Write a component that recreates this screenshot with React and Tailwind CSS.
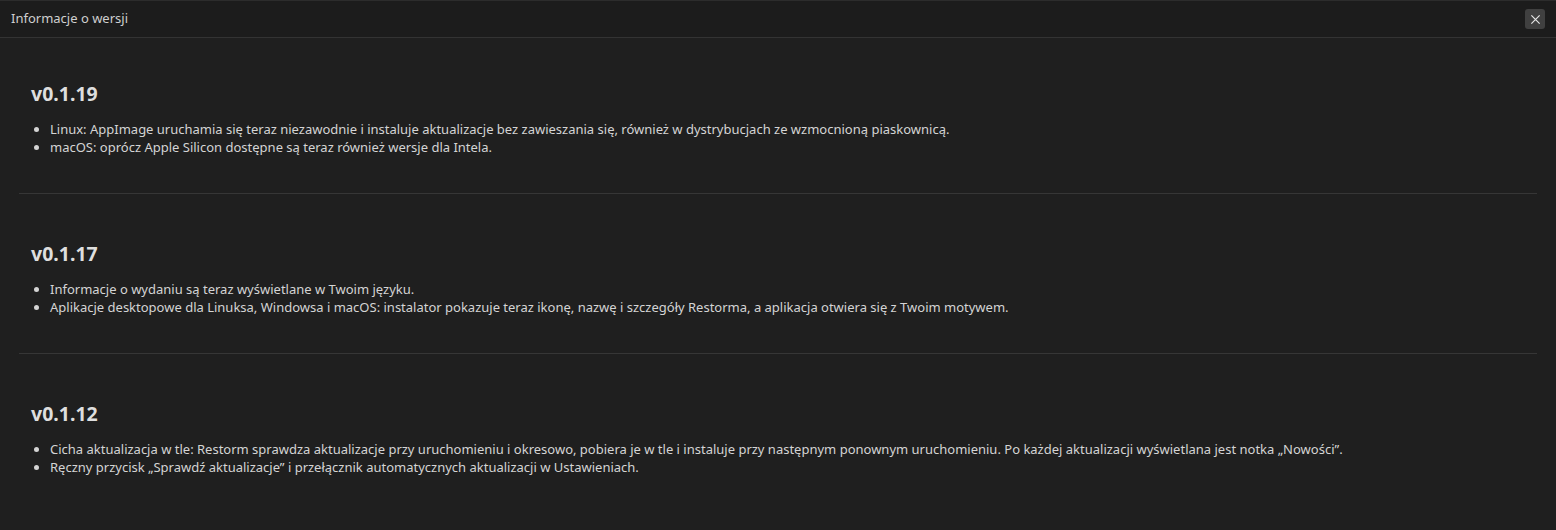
import React from 'react';

const releases = [
  {
    version: 'v0.1.19',
    notes: [
      'Linux: AppImage uruchamia się teraz niezawodnie i instaluje aktualizacje bez zawieszania się, również w dystrybucjach ze wzmocnioną piaskownicą.',
      'macOS: oprócz Apple Silicon dostępne są teraz również wersje dla Intela.',
    ],
  },
  {
    version: 'v0.1.17',
    notes: [
      'Informacje o wydaniu są teraz wyświetlane w Twoim języku.',
      'Aplikacje desktopowe dla Linuksa, Windowsa i macOS: instalator pokazuje teraz ikonę, nazwę i szczegóły Restorma, a aplikacja otwiera się z Twoim motywem.',
    ],
  },
  {
    version: 'v0.1.12',
    notes: [
      'Cicha aktualizacja w tle: Restorm sprawdza aktualizacje przy uruchomieniu i okresowo, pobiera je w tle i instaluje przy następnym ponownym uruchomieniu. Po każdej aktualizacji wyświetlana jest notka „Nowości”.',
      'Ręczny przycisk „Sprawdź aktualizacje” i przełącznik automatycznych aktualizacji w Ustawieniach.',
    ],
  },
];

const App = () => {
  return (
    <div className="h-[530px] w-full overflow-hidden bg-[#1f1f1f] font-['Noto_Sans',sans-serif] text-[#d4d4d4]">
      {/* Title bar */}
      <div className="flex h-[38px] items-center justify-between border-t border-b border-t-[#2c2c2c] border-b-[#333333] bg-[#1c1c1c] pl-[11px] pr-[11px]">
        <span className="text-[13px] text-[#cfcfcf]">Informacje o wersji</span>
        <button className="flex h-[20px] w-[20px] items-center justify-center rounded-[3px] bg-[#404040] text-[#e5e5e5]">
          <svg width="11" height="11" viewBox="0 0 12 12" fill="none" stroke="currentColor" strokeWidth="1.3">
            <path d="M1.5 1.5l9 9M10.5 1.5l-9 9" />
          </svg>
        </button>
      </div>

      <div className="px-[19px] pt-[42px]">
        {releases.map((release, i) => (
          <div key={release.version}>
            {i > 0 && <div className="mt-[37px] mb-[46px] h-px bg-[#363636]" />}
            <div className="px-[12px]">
              <h2 className="text-[19.5px] leading-[28px] font-bold text-[#dedede]">{release.version}</h2>
              <ul className="mt-[12px] list-disc pl-[19px] text-[13px] leading-[18px]">
                {release.notes.map((note) => (
                  <li key={note}>{note}</li>
                ))}
              </ul>
            </div>
          </div>
        ))}
      </div>
    </div>
  );
};

export default App;
